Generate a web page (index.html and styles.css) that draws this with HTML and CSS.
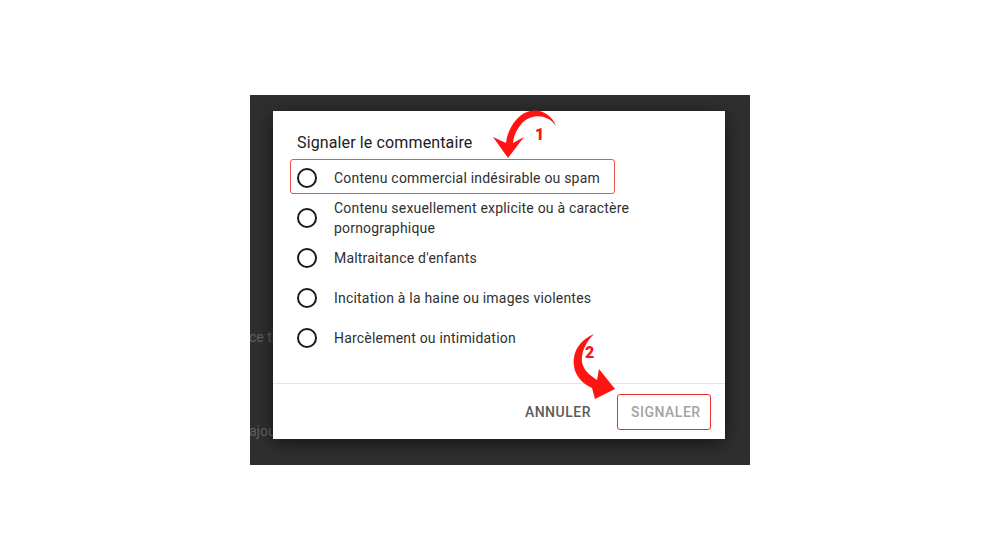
FILE: index.html
```html
<!DOCTYPE html>
<html lang="fr">
<head>
<meta charset="utf-8">
<title>Signaler le commentaire</title>
<link rel="stylesheet" href="styles.css">
</head>
<body>
<div class="stage">
  <div class="panel">
    <div class="bg-line bg-line1">ce travail</div>
    <div class="bg-line bg-line2">ajouter</div>

    <div class="dialog">
      <div class="dlg-body">
        <div class="dlg-title">Signaler le commentaire</div>
        <ul class="options">
          <li class="option option-first">
            <span class="radio"></span>
            <span class="label">Contenu commercial indésirable ou spam</span>
            <span class="mark-box"></span>
          </li>
          <li class="option">
            <span class="radio"></span>
            <span class="label">Contenu sexuellement explicite ou à caractère pornographique</span>
          </li>
          <li class="option">
            <span class="radio"></span>
            <span class="label">Maltraitance d'enfants</span>
          </li>
          <li class="option">
            <span class="radio"></span>
            <span class="label">Incitation à la haine ou images violentes</span>
          </li>
          <li class="option">
            <span class="radio"></span>
            <span class="label">Harcèlement ou intimidation</span>
          </li>
        </ul>
      </div>
      <div class="dlg-footer">
        <button class="btn btn-cancel">Annuler</button>
        <button class="btn btn-submit">Signaler</button>
      </div>
    </div>
  </div>
</div>

<svg class="annot" width="1000" height="560" viewBox="0 0 1000 560" aria-hidden="true">
  <path class="arrow" d="M556,126 C550,110 530,104 516,120 C511,126 507,134 506,143 L493,137 L508,158 L524,137 L513,143 C514,134 518,128 522,123 C532,113 548,114 556,126 Z"/>
  <text class="num" x="535" y="140">1</text>
  <path class="arrow" d="M594,334 C580,340 572,352 574,366 C575,376 583,384 592,388 L595,399 L615,389 L599,369 L597,380 C589,375 583,369 582,362 C581,352 586,342 594,334 Z"/>
  <text class="num" x="585" y="358">2</text>
</svg>
</body>
</html>
```

FILE: styles.css
```css
html, body {
  margin: 0;
  padding: 0;
  background: #ffffff;
}

body {
  width: 1000px;
  height: 560px;
  position: relative;
  overflow: hidden;
  font-family: Roboto, "Liberation Sans", Arial, sans-serif;
}

.stage {
  padding: 95px 0 0 250px;
}

.panel {
  width: 500px;
  height: 370px;
  background: #2f2f2f;
  position: relative;
  overflow: hidden;
}

.bg-line {
  font-size: 14px;
  line-height: 20px;
  color: #626262;
  white-space: nowrap;
  margin-left: -1px;
}

.bg-line1 {
  padding-top: 232px;
}

.bg-line2 {
  margin-top: 74px;
}

.dialog {
  position: absolute;
  left: 23px;
  top: 16px;
  width: 452px;
  height: 328px;
  background: #ffffff;
  box-shadow: 0 4px 18px rgba(0, 0, 0, 0.55);
  display: flex;
  flex-direction: column;
}

.dlg-body {
  padding: 20px 24px 25px 24px;
  flex: 1;
}

.dlg-title {
  font-size: 16px;
  line-height: 24px;
  color: #212121;
  letter-spacing: 0.13px;
  margin-bottom: 3px;
}

.options {
  list-style: none;
  margin: 0;
  padding: 0;
}

.option {
  position: relative;
  display: flex;
  align-items: center;
  gap: 17px;
  min-height: 40px;
}

.radio {
  flex: none;
  width: 16px;
  height: 16px;
  border: 2px solid #1a1a1a;
  border-radius: 50%;
}

.label {
  font-size: 14px;
  line-height: 20px;
  color: #303030;
  letter-spacing: 0.2px;
}

.mark-box {
  position: absolute;
  left: -7px;
  top: 1px;
  width: 323px;
  height: 33px;
  border: 1.5px solid #f05353;
  border-radius: 3px;
}

.dlg-footer {
  border-top: 1px solid #e5e5e5;
  height: 55px;
  display: flex;
  justify-content: flex-end;
  align-items: center;
  padding-right: 14px;
  gap: 10px;
}

.btn {
  font-family: Roboto, "Liberation Sans", Arial, sans-serif;
  font-size: 14px;
  font-weight: 500;
  letter-spacing: 0.5px;
  text-transform: uppercase;
  background: none;
  border: none;
  height: 36px;
  padding: 0 16px;
  cursor: pointer;
}

.btn-cancel {
  color: #5c5c5c;
}

.btn-submit {
  color: #a3a3a3;
  width: 94px;
  padding: 0 10px 0 13px;
  text-align: left;
  border: 1.5px solid #ee3030;
  border-radius: 3px;
}

.annot {
  position: absolute;
  left: 0;
  top: 0;
  pointer-events: none;
}

.arrow {
  fill: #ff1414;
}

.num {
  fill: #ff1414;
  font-family: Roboto, "Liberation Sans", Arial, sans-serif;
  font-weight: 900;
  font-size: 16px;
}
```
